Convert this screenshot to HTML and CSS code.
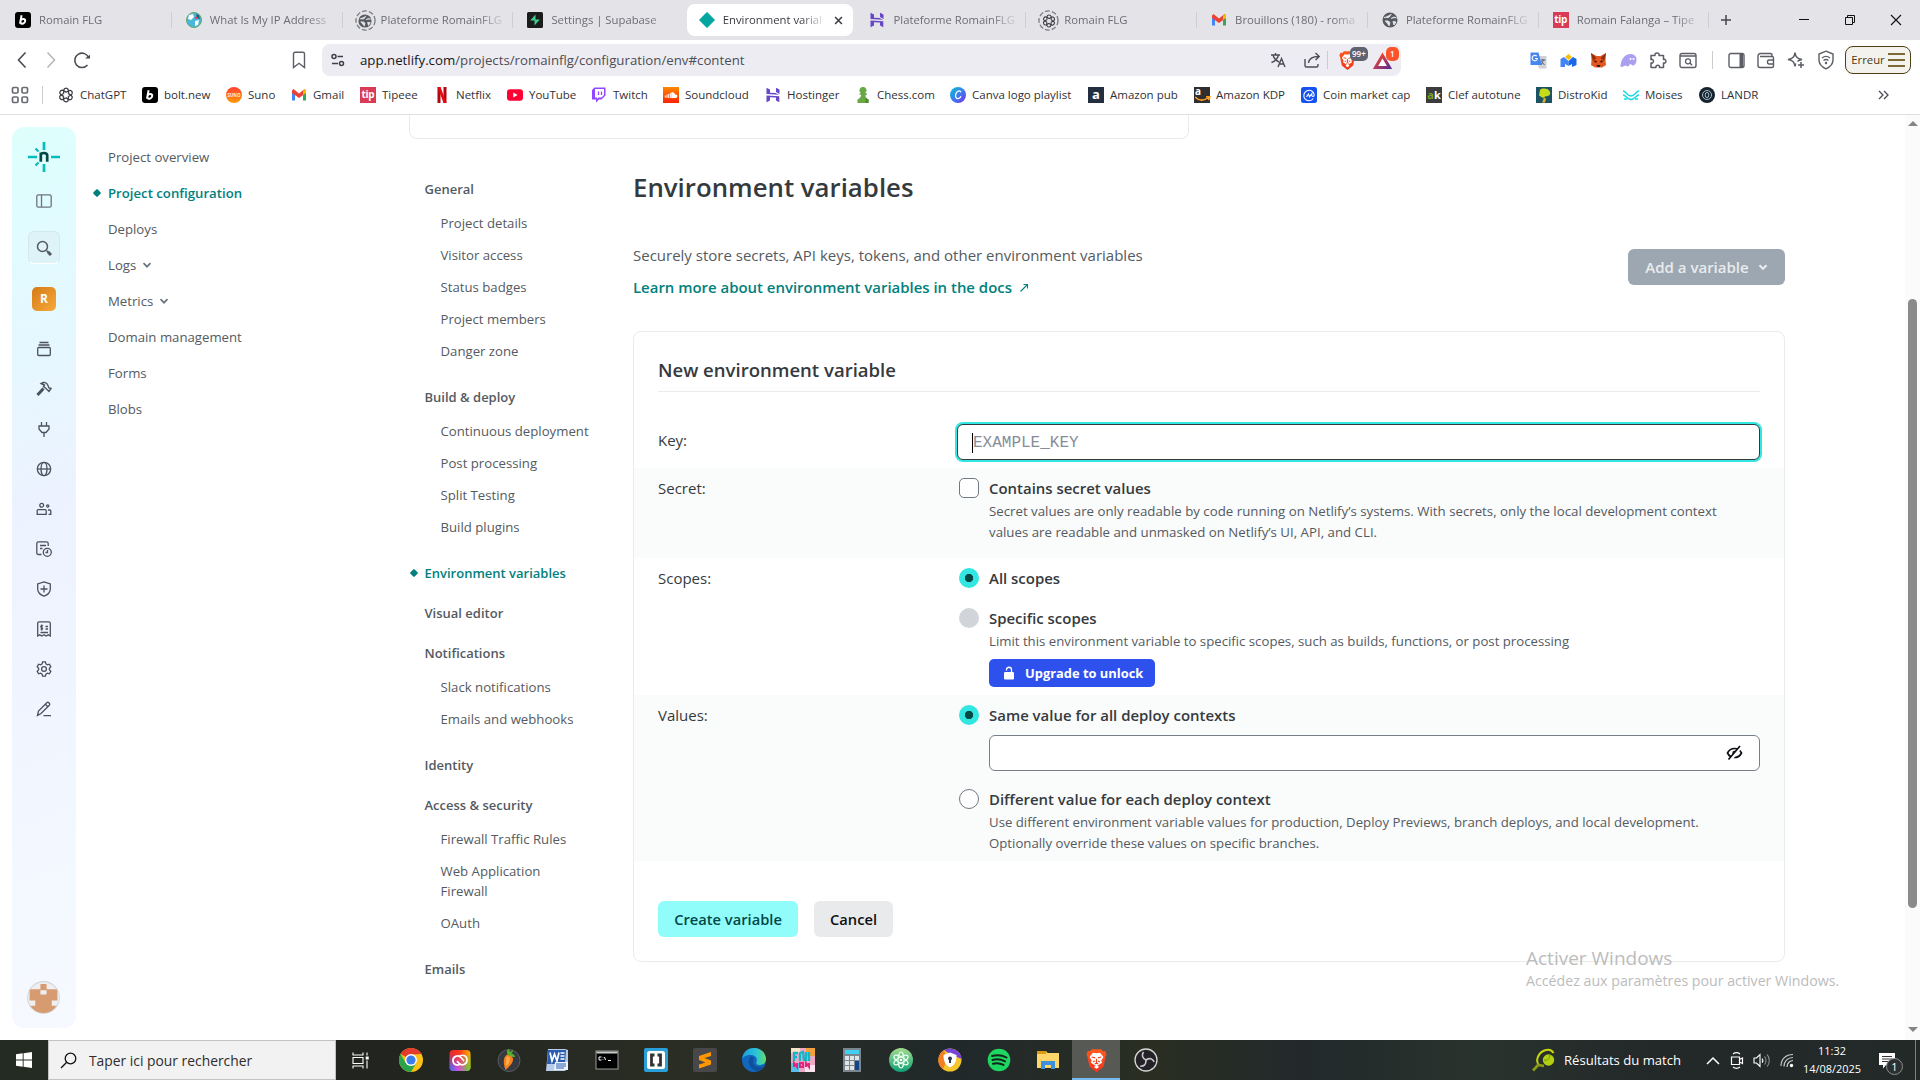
FILE: index.html
```html
<!DOCTYPE html>
<html lang="fr">
<head>
<meta charset="utf-8">
<title>Environment variables</title>
<link rel="stylesheet" href="styles.css">
</head>
<body>
<svg class="defs" width="0" height="0">
  <defs>
    <linearGradient id="gCanva" x1="0" y1="0" x2="1" y2="1"><stop offset="0" stop-color="#00c4cc"/><stop offset=".5" stop-color="#3a7ff0"/><stop offset="1" stop-color="#7d2ae8"/></linearGradient>
    <linearGradient id="gCloud" x1="0" y1="0" x2="0" y2="1"><stop offset="0" stop-color="#ff8800"/><stop offset="1" stop-color="#ff2200"/></linearGradient>
    <linearGradient id="gBrave" x1="0" y1="0" x2="0" y2="1"><stop offset="0" stop-color="#ff5a1f"/><stop offset="1" stop-color="#f0341c"/></linearGradient>
    <linearGradient id="gBat" x1="0" y1="0" x2="1" y2="1"><stop offset="0" stop-color="#ff4724"/><stop offset="1" stop-color="#662d91"/></linearGradient>
    <linearGradient id="gEdge" x1="0" y1="0" x2="1" y2="0"><stop offset="0" stop-color="#1b9de2"/><stop offset=".6" stop-color="#2cc3d5"/><stop offset="1" stop-color="#5fdc6a"/></linearGradient>
    <linearGradient id="gCcA" x1="0" y1="0" x2="1" y2="0"><stop offset="0" stop-color="#e8262a"/><stop offset=".5" stop-color="#ff3a1a"/><stop offset="1" stop-color="#ffb400"/></linearGradient>
    <linearGradient id="gCcB" x1="0" y1="0" x2="1" y2="0"><stop offset="0" stop-color="#3a6cff"/><stop offset=".45" stop-color="#d84fe0"/><stop offset="1" stop-color="#58dc20"/></linearGradient>
    <linearGradient id="gFade" x1="0" y1="0" x2="0" y2="1"><stop offset=".2" stop-color="#000"/><stop offset=".9" stop-color="#fff"/></linearGradient>
    <mask id="mFade" maskContentUnits="userSpaceOnUse"><rect width="24" height="24" fill="url(#gFade)"/></mask>
    <linearGradient id="gAtom" x1="0" y1="0" x2="0" y2="1"><stop offset="0" stop-color="#a5dc8c"/><stop offset="1" stop-color="#0f9f77"/></linearGradient>
    <symbol id="i-bolt" viewBox="0 0 16 16"><rect width="16" height="16" rx="3" fill="#000"/><path d="M6.600 3.200 5 11.800M5.800 8.200c1-1.800 4.600-1.800 4.400.8-.2 2.600-3.600 3.500-4.800 1.600" fill="none" stroke="#fff" stroke-width="2"/></symbol>
    <symbol id="i-globe" viewBox="0 0 16 16"><circle cx="8" cy="8" r="7.500" fill="#565a61"/><path d="M2 5.500c2-.5 3 .5 4.500 0S8 3 9.500 2M3 9h3l2 1.500L7 14M9 6.500 12 5l2.500 1M11 9.500l3 .5-2 3z" fill="#e4e3e8" stroke="#e4e3e8" stroke-width="1"/></symbol>
    <symbol id="i-earth" viewBox="0 0 16 16"><circle cx="8" cy="8" r="7.500" fill="#49b7dc" stroke="#65a963"/><path d="M3 3l4-1 1 3-3 3-3-1zM9 9l4-1-1 5-3 1z" fill="#fff"/><path d="M10 2l3 1 1 4-3-1z" fill="#235c88"/><circle cx="10" cy="6" r="1.200" fill="#e44"/></symbol>
    <symbol id="i-knot" viewBox="0 0 16 16"><g fill="none" stroke="currentColor" stroke-width="1.300"><path d="M8 5.300 11 3.600c2.800-1 4.300 2.300 2.500 4.100L10.400 9.500"/><path d="M8 5.300 11 3.600c2.800-1 4.300 2.300 2.500 4.100L10.400 9.500" transform="rotate(60 8 8)"/><path d="M8 5.300 11 3.600c2.800-1 4.300 2.300 2.500 4.100L10.400 9.500" transform="rotate(120 8 8)"/><path d="M8 5.300 11 3.600c2.800-1 4.300 2.300 2.500 4.100L10.400 9.500" transform="rotate(180 8 8)"/><path d="M8 5.300 11 3.600c2.800-1 4.300 2.300 2.500 4.100L10.400 9.500" transform="rotate(240 8 8)"/><path d="M8 5.300 11 3.600c2.800-1 4.300 2.300 2.500 4.100L10.400 9.500" transform="rotate(300 8 8)"/></g></symbol>
    <symbol id="i-supabase" viewBox="0 0 16 16"><rect width="16" height="16" rx="1.500" fill="#1c1c1c"/><path d="M8.500 2.500v6H3.200zM7.500 13.500v-6h5.300z" fill="#3ecf8e"/></symbol>
    <symbol id="i-diamond" viewBox="0 0 16 16"><path d="M8 .3 15.700 8 8 15.700.3 8z" fill="#05a6a2" stroke="#05a6a2" stroke-linejoin="round" stroke-width=".6"/></symbol>
    <symbol id="i-hostinger" viewBox="0 0 16 16"><path d="M1.500 7V.8L5 2.600v3.200l5.500.1L14 7.800zM11 5V.8l3.500 1.800V7zM1.500 15.200V8.600l12.800.6v6L11 13.400v-3l-6-.1v3.200z" fill="#6747c7"/></symbol>
    <symbol id="i-gmail" viewBox="0 0 16 16"><path d="M1 4v9.500h3V7z" fill="#4285f4"/><path d="M12 7v6.500h3V4z" fill="#34a853"/><path d="M1 3.500 2.500 2 8 6.500 13.500 2 15 3.500V6L8 11 1 6z" fill="#ea4335"/><path d="M12 4v4l3-2V4c0-1.500-1.500-2-2.500-1z" fill="#fbbc04"/></symbol>
    <symbol id="i-netflix" viewBox="0 0 16 16"><path d="M3.500 0h3v16l-3 .1zM9.500 0h3v16h-3z" fill="#b1060f"/><path d="M3.500 0h3l6 16h-3z" fill="#e50914"/></symbol>
    <symbol id="i-youtube" viewBox="0 0 16 16"><rect y="2.300" width="16" height="11.400" rx="3" fill="#ff0033"/><path d="M6.300 5.500v5l4.300-2.500z" fill="#fff"/></symbol>
    <symbol id="i-twitch" viewBox="0 0 16 16"><path d="M3.500.5h11v8l-4 4H8l-3 3v-3H1V3z" fill="#9146ff"/><path d="M4 2h9v6l-2.500 2.500h-3L6 12v-1.500H4z" fill="#fff"/><path d="M7.500 4.500V8M10.500 4.500V8" stroke="#9146ff" stroke-width="1.300"/></symbol>
    <symbol id="i-cloud" viewBox="0 0 16 16"><rect width="16" height="16" fill="url(#gCloud)"/><path d="M2.300 8.500v2M4 7.500v3.500M5.700 7v4M7.300 6v5" stroke="#fff"/><path d="M8.200 11V5.500c2-1 3.600.3 3.800 2 1.500-.3 2.500.6 2.400 1.800-.1 1-.8 1.700-1.800 1.700z" fill="#fff"/></symbol>
    <symbol id="i-chess" viewBox="0 0 16 16"><path d="M8 0a3.200 3.200 0 0 1 2 5.900L11.500 6.600v1.200H9.800c.2 2.200 1 3.200 3.700 4.700V16h-11v-3.500c2.700-1.500 3.500-2.500 3.700-4.700H4.500V6.600L6 5.900A3.200 3.200 0 0 1 8 0z" fill="#69a844"/><path d="M10.500 6.600h1V7.800H9.800c.2 2.200 1 3.200 3.700 4.700V16h-3z" fill="#4d8a2f"/></symbol>
    <symbol id="i-canva" viewBox="0 0 16 16"><circle cx="8" cy="8" r="8" fill="url(#gCanva)"/><path d="M11 5.200C10 3 6.800 3.700 5.800 7c-.9 3 .6 5 2.500 4.600 1.300-.3 2.200-1.300 2.700-2.300" fill="none" stroke="#fff" stroke-width="1.300"/></symbol>
    <symbol id="i-cmc" viewBox="0 0 16 16"><rect width="16" height="16" rx="2.500" fill="#1652f0"/><path d="M12.300 11.500a5.200 5.200 0 1 1 .9-3.500c0 2-2.400 2-2.400.2V6.700L8.500 9.800l-1-2.900-2 3" fill="none" stroke="#fff" stroke-width="1.100"/></symbol>
    <symbol id="i-distro" viewBox="0 0 16 16"><rect width="16" height="16" fill="#1d5265"/><path d="M4 3C6 .8 12 1 13.500 4s.5 4-1.500 5l-3 .5L7 11 3 8.500z" fill="#c6dc1b"/><path d="M8 10l2 2-1 3.500H6L7.500 12z" fill="#d8b12a"/></symbol>
    <symbol id="i-moises" viewBox="0 0 16 16"><path d="M0 4c3 0 4 5 8 5s5-5 8-5M0 8c3 0 4 4.500 8 4.500S13 8 16 8M1 12h3M12 12h3" fill="none" stroke="#19d7e5" stroke-width="1.400"/></symbol>
    <symbol id="i-landr" viewBox="0 0 16 16"><circle cx="8" cy="8" r="8" fill="#17242f"/><circle cx="8" cy="8" r="4.500" fill="none" stroke="#a9bdcb"/><rect x="6.300" y="5.500" width="3.400" height="5" rx="1.700" fill="none" stroke="#a9bdcb"/></symbol>
    <symbol id="i-lion" viewBox="0 0 24 28"><path d="M7 1h10l2.500 2.500L22 3l1.500 4-1 2L20 21l-8 6.500L4 21 1.500 9l-1-2L2 3l2.500.5z" fill="url(#gBrave)"/><path d="M8 5l4 .7L16 5l4 5-2.500 4 .8 2.500L13 20l2 1.500-3 2-3-2 2-1.500-5.300-3.500.8-2.500L4 10z" fill="#fff"/><path d="M6.500 10l4 1M17.500 10l-4 1M12 12v5l-2 1M12 17l2 1M8 15.500l2.500-1M16 15.500l-2.500-1" stroke="#f4421c" stroke-width="1.300" fill="none"/></symbol>
    <symbol id="i-dot-ring" viewBox="0 0 22 22"><circle cx="11" cy="11" r="10" fill="none" stroke="#7b7c82" stroke-width="1.400" stroke-dasharray="5 2.200"/></symbol>
    <symbol id="i-chev" viewBox="0 0 10 10"><path d="M1.500 3.200 5 6.700l3.500-3.500" fill="none" stroke="currentColor" stroke-width="1.700"/></symbol>
  </defs>
</svg>

<div class="screen">
  <header class="tabstrip">
    <div class="tab"><svg class="fav"><use href="#i-bolt"/></svg><span class="tab-title">Romain FLG</span></div>
    <div class="tab"><svg class="fav"><use href="#i-earth"/></svg><span class="tab-title">What Is My IP Address</span></div>
    <div class="tab"><span class="ringed"><svg class="ring"><use href="#i-dot-ring"/></svg><svg class="fav"><use href="#i-globe"/></svg></span><span class="tab-title">Plateforme RomainFLG</span></div>
    <div class="tab no-sep"><svg class="fav"><use href="#i-supabase"/></svg><span class="tab-title">Settings | Supabase</span></div>
    <div class="tab active"><svg class="fav"><use href="#i-diamond"/></svg><span class="tab-title">Environment varial</span><svg class="close" viewBox="0 0 10 10"><path d="M1.200 1.200l7.600 7.600M8.800 1.200 1.200 8.800" stroke="#3a3b40" stroke-width="1.700"/></svg></div>
    <div class="tab"><svg class="fav"><use href="#i-hostinger"/></svg><span class="tab-title">Plateforme RomainFLG</span></div>
    <div class="tab"><span class="ringed"><svg class="ring"><use href="#i-dot-ring"/></svg><svg class="fav dark"><use href="#i-knot"/></svg></span><span class="tab-title">Romain FLG</span></div>
    <div class="tab"><svg class="fav"><use href="#i-gmail"/></svg><span class="tab-title">Brouillons (180) - roma</span></div>
    <div class="tab"><svg class="fav"><use href="#i-globe"/></svg><span class="tab-title">Plateforme RomainFLG</span></div>
    <div class="tab"><span class="fav tip">tip</span><span class="tab-title">Romain Falanga – Tipe</span></div>
    <svg class="newtab" viewBox="0 0 12 12"><path d="M6 1v10M1 6h10" stroke="#45464c" stroke-width="1.500"/></svg>
    <div class="winctl">
      <svg viewBox="0 0 12 12"><path d="M1 5.500h10" stroke="#111"/></svg>
      <svg viewBox="0 0 12 12"><path d="M1.500 3.500h7v7h-7zM3.500 3.500v-2h7v7h-2" fill="none" stroke="#111"/></svg>
      <svg viewBox="0 0 12 12"><path d="M1 1l10 10M11 1 1 11" stroke="#111" stroke-width="1.100"/></svg>
    </div>
  </header>

  <div class="toolbar">
    <div class="nav-btns">
      <svg width="12" height="18" viewBox="0 0 12 18"><path d="M9.500 1.500 2.500 9l7 7.500" fill="none" stroke="#4b4d55" stroke-width="1.600"/></svg>
      <svg width="12" height="18" viewBox="0 0 12 18"><path d="M2.500 1.500 9.500 9l-7 7.500" fill="none" stroke="#b6b7bc" stroke-width="1.600"/></svg>
      <svg width="18" height="18" viewBox="0 0 18 18"><path d="M14.500 14a7.200 7.200 0 1 1 1.300-7" fill="none" stroke="#4b4d55" stroke-width="1.600"/><path d="M12 7.500h5V3.800z" fill="#4b4d55"/></svg>
    </div>
    <svg class="bookmark" width="14" height="18" viewBox="0 0 14 18"><path d="M1.500 3c0-1 .6-1.700 1.600-1.700h7.800c1 0 1.600.7 1.600 1.700v13.500L7 12.300 1.500 16.500z" fill="none" stroke="#5c5e66" stroke-width="1.400"/></svg>
    <div class="urlbar">
      <svg width="14" height="14" viewBox="0 0 14 14"><g fill="none" stroke="#3e4047" stroke-width="1.500"><circle cx="3" cy="3.500" r="2"/><path d="M6.500 3.500H12M1 10.500h6"/><circle cx="10.500" cy="10.500" r="2"/></g></svg>
      <span class="url"><b>app.netlify.com</b>/projects/romainflg/configuration/env#content</span>
      <svg class="u-tr" width="17" height="16" viewBox="0 0 17 16"><g fill="none" stroke="#4b4d55" stroke-width="1.400"><path d="M1 3h9M5.500 1v2M3 3c1 4 4 6 6 7M8.500 3c-1 4-4 6.500-7 7.500M8 15l3.500-8.500L15 15M9.500 12h4.200"/></g></svg>
      <svg class="u-sh" width="17" height="16" viewBox="0 0 17 16"><path d="M1 7v6.500c0 1 .5 1.500 1.500 1.500h10c1 0 1.500-.5 1.500-1.500V12M4.500 11C5 7 8 4.500 14.500 4.500M11.500 1l3.700 3.500-3.700 3.500" fill="none" stroke="#4b4d55" stroke-width="1.400"/></svg>
      <i class="vsep"></i>
      <span class="badged"><svg width="17" height="21" viewBox="0 0 24 28"><use href="#i-lion"/></svg><em class="bdg grey">99+</em></span>
      <span class="badged"><svg width="19" height="17" viewBox="0 0 19 17"><path d="M9.500 3.500 16.500 15.500h-14z" fill="#fff" stroke="url(#gBat)" stroke-width="3"/></svg><em class="bdg red">1</em></span>
    </div>
    <div class="exts">
      <svg width="17" height="17" viewBox="0 0 17 17"><path d="M6 4h10.500v12.500H9z" fill="#cfd1d6"/><path d="M.5.500h8L12 13H.5z" fill="#4686ef"/><path d="M6.800 4.200a2.700 2.700 0 1 0 .7 2.300H5" fill="none" stroke="#fff" stroke-width="1.100"/><path d="M11 8h4.500M13 7v1c0 2-1 3.500-2 4.500M11.500 9.500l3 3.500" stroke="#5a5e68" fill="none"/></svg>
      <svg width="17" height="15" viewBox="0 0 17 15"><path d="M8.500 1 12 4 8.500 7 5 4z" fill="#fbbc04"/><path d="M.5 6 4 4l4.500 4v5L5 11v3H.5z" fill="#4285f4"/><path d="M16.500 6 13 4 8.500 8v5l3.500-2v3l4.500-2z" fill="#1a67e8"/></svg>
      <svg width="17" height="17" viewBox="0 0 17 17"><path d="M1 1l5.500 3h4L16 1l-.5 8 .5 4-4 2.500H5L1 13l.5-4z" fill="#e4571e"/><path d="M1 1l5.500 5L3 9z" fill="#8f2f11"/><path d="M16 1l-5.500 5L14 9z" fill="#8f2f11"/><path d="M4.500 9l2 1M12.500 9l-2 1" stroke="#2b1a10" stroke-width="1.400"/><path d="M6.500 13h4l-1 2h-2z" fill="#222"/></svg>
      <svg width="17" height="15" viewBox="0 0 17 15"><path d="M.5 14c0-7 4-13 10-13 4 0 6 2.500 6 5.500 0 4-2 6-4 6-1 0-1-1.500-2-1.500s-1 2.500-3 2.500c-1 0-1-1-2-1s-2 1.500-5 1.500z" fill="#ab9ff2"/><circle cx="10.500" cy="6" r="1" fill="#fff"/><circle cx="13.500" cy="6" r="1" fill="#fff"/></svg>
      <svg width="18" height="18" viewBox="0 0 18 18"><path d="M2 4.500h4c-1-3.500 5-3.500 4 0h4.500v4c3.200-1 3.200 4.500 0 3.500v4.500h-4c.8-3-4.200-3-3.500 0H2V12c3.200 1 3.200-4.500 0-3.500z" fill="none" stroke="#5c5e66" stroke-width="1.500" stroke-linejoin="round"/></svg>
      <svg width="18" height="17" viewBox="0 0 18 17"><rect x="1" y="1.500" width="16" height="14" rx="2" fill="none" stroke="#5c5e66" stroke-width="1.400"/><path d="M1 4h16M11 11l2 2.200" stroke="#5c5e66" stroke-width="1.400"/><circle cx="9" cy="9.300" r="2.500" fill="none" stroke="#5c5e66" stroke-width="1.300"/></svg>
      <i class="vsep"></i>
      <svg width="17" height="17" viewBox="0 0 17 17"><rect x="1" y="1.500" width="15" height="14" rx="2" fill="none" stroke="#5c5e66" stroke-width="1.400"/><path d="M11.500 2H15v13h-3.500z" fill="#5c5e66"/></svg>
      <svg width="18" height="17" viewBox="0 0 18 17"><g fill="none" stroke="#5c5e66" stroke-width="1.400"><path d="M15 4.500V3c0-1-.6-1.500-1.500-1.500h-10C2 1.500 1 2.500 1 4v9.500c0 1 .7 2 2 2h12c1 0 1.500-.6 1.500-1.500V6c0-1-.5-1.500-1.500-1.500H3"/><path d="M16.500 8H12c-2 0-2 4 0 4h4.500"/></g></svg>
      <svg width="18" height="18" viewBox="0 0 18 18"><path d="M8 1.500C8.500 6 10 7.500 15 8.500c-2 .4-3.500 1-4.500 1.800M8 15.500C7.500 11 6 9.500 1 8.500 6 7.500 7.500 6 8 1.500M8 15.500c.2-1.200.4-2.200.8-3M14 11v6M11 14h6" fill="none" stroke="#5c5e66" stroke-width="1.500"/></svg>
      <svg width="18" height="20" viewBox="0 0 18 20"><g fill="none" stroke="#5c5e66" stroke-width="1.400"><path d="M9 1.200 16 4v6c0 4-3 7-7 8.800C5 17 2 14 2 10V4z"/><path d="M5 8c2.500-2 5.500-2 8 0M6.500 10.500c1.500-1.200 3.500-1.200 5 0"/></g><circle cx="9" cy="13" r="1.200" fill="#5c5e66"/></svg>
    </div>
    <div class="errbtn">Erreur<svg width="17" height="16" viewBox="0 0 17 16"><path d="M0 2h17M0 8h17M0 14h17" stroke="#7d6a33" stroke-width="1.800"/></svg></div>
  </div>

  <div class="bookmarks">
    <svg class="apps" width="18" height="18" viewBox="0 0 18 18"><g fill="none" stroke="#6a6c74" stroke-width="1.700"><rect x="1.500" y="1.500" width="5.500" height="5.500" rx="1.200"/><rect x="11" y="1.500" width="5.500" height="5.500" rx="1.200"/><rect x="1.500" y="11" width="5.500" height="5.500" rx="1.200"/><rect x="11" y="11" width="5.500" height="5.500" rx="1.200"/></g></svg>
    <i class="vsep"></i>
    <div class="bm-list">
      <span class="bm"><svg class="fav dark"><use href="#i-knot"/></svg>ChatGPT</span>
      <span class="bm"><svg class="fav"><use href="#i-bolt"/></svg>bolt.new</span>
      <span class="bm"><span class="fav suno">SUNO</span>Suno</span>
      <span class="bm"><svg class="fav"><use href="#i-gmail"/></svg>Gmail</span>
      <span class="bm"><span class="fav tip">tip</span>Tipeee</span>
      <span class="bm"><svg class="fav"><use href="#i-netflix"/></svg>Netflix</span>
      <span class="bm"><svg class="fav"><use href="#i-youtube"/></svg>YouTube</span>
      <span class="bm"><svg class="fav"><use href="#i-twitch"/></svg>Twitch</span>
      <span class="bm"><svg class="fav"><use href="#i-cloud"/></svg>Soundcloud</span>
      <span class="bm"><svg class="fav"><use href="#i-hostinger"/></svg>Hostinger</span>
      <span class="bm"><svg class="fav"><use href="#i-chess"/></svg>Chess.com</span>
      <span class="bm"><svg class="fav"><use href="#i-canva"/></svg>Canva logo playlist</span>
      <span class="bm"><span class="fav amz">a</span>Amazon pub</span>
      <span class="bm"><span class="fav kdp">a<svg viewBox="0 0 16 6"><path d="M0 1c4 4 9 4 14 0M11 .5l4-.2-1.500 4" fill="none" stroke="#ff9d1e" stroke-width="1.600"/></svg></span>Amazon KDP</span>
      <span class="bm"><svg class="fav"><use href="#i-cmc"/></svg>Coin market cap</span>
      <span class="bm"><span class="fav ak"><i>a</i>k</span>Clef autotune</span>
      <span class="bm"><svg class="fav"><use href="#i-distro"/></svg>DistroKid</span>
      <span class="bm"><svg class="fav"><use href="#i-moises"/></svg>Moises</span>
      <span class="bm"><svg class="fav"><use href="#i-landr"/></svg>LANDR</span>
    </div>
    <svg class="more" width="11" height="10" viewBox="0 0 11 10"><path d="M1 1l4 4-4 4M6 1l4 4-4 4" fill="none" stroke="#4b4d55" stroke-width="1.300"/></svg>
  </div>

  <div class="page">
    <aside class="rail">
      <svg class="logo" viewBox="0 0 32 32"><g stroke="#05bdba" stroke-width="2.700"><path d="M16 1v8M16 23v8M0 16h9M23 16h9"/><path d="M7.500 7.500l3 3M7.500 24.500l3-3" stroke-width="2.300"/></g><path d="M12.800 20.700v-9.200M12.800 13c2-1.500 6.400-1.500 6.400 1.500v6.200" fill="none" stroke="#014847" stroke-width="2.700"/></svg>
      <svg class="panel" viewBox="0 0 16 16"><rect x=".8" y="1.800" width="14.400" height="12.400" rx="1.500" fill="none" stroke="#6c7480" stroke-width="1.300"/><path d="M5.500 2v12" stroke="#6c7480" stroke-width="1.300"/></svg>
      <div class="search-btn"><svg class="ico" viewBox="0 0 16 16"><circle cx="6.500" cy="6.500" r="5" fill="none" stroke="#545a61" stroke-width="1.500"/><path d="M10.500 10.500l1.500 1.500" stroke="#545a61" stroke-width="1.500"/><path d="M11.800 11.800 15 15" stroke="#545a61" stroke-width="3"/></svg></div>
      <div class="team">R</div>
      <div class="rail-icons">
        <svg class="ico" viewBox="0 0 16 16"><path d="M3.500 1.500h9M2.500 4h11"/><rect x="1.700" y="6.500" width="12.600" height="8" rx="1"/></svg>
        <svg class="ico" viewBox="0 0 16 16"><path d="M5 2.500c3-2 6-1 7 2l1 2.500 2 .5-2 3-3.500-3.500-2-1.500 1-1.500z" stroke-width="1.400"/><path d="M7.500 7.500 1.500 14" stroke-width="3"/></svg>
        <svg class="ico" viewBox="0 0 16 16"><path d="M5.500 1v3.500M10.500 1v3.500M3 5h10v3l-3 3.500H6L3 8zM8 11.500V16"/></svg>
        <svg class="ico" viewBox="0 0 16 16"><circle cx="8" cy="8" r="6.700"/><ellipse cx="8" cy="8" rx="3" ry="6.700"/><path d="M1.300 8h13.400"/></svg>
        <svg class="ico" viewBox="0 0 16 16"><circle cx="5.700" cy="4.300" r="1.900"/><circle cx="11.700" cy="5" r="1.100"/><path d="M1.200 13.300V9.600c0-.8.5-1 1-1h7c.5 0 1 .4 1 1v3.700zM12 9h1.800c.6 0 1 .3 1 .9v3.400H12.500"/></svg>
        <svg class="ico" viewBox="0 0 16 16"><path d="M5.500 13.500H2.500c-1 0-1.700-.5-1.700-1.500V2.500C.8 1.500 1.500.8 2.500.8h8c1 0 1.700.7 1.700 1.700V5M4 4.500h6M4 7.500h2.500"/><circle cx="11.300" cy="11.300" r="4"/><path d="M11.500 9v2.500h-2"/></svg>
        <svg class="ico" viewBox="0 0 16 16"><path d="M8 .9 14.300 3v5c0 3.500-3 6-6.300 7.200C4.700 14 1.700 11.500 1.700 8V3zM8 4.500v7M4.500 8h7"/></svg>
        <svg class="ico" viewBox="0 0 16 16"><path d="M1.700 15V2.500c0-1 .6-1.700 1.600-1.700h9.400c1 0 1.600.7 1.600 1.700V15l-2-1.200L10 15l-2-1.200L6 15l-2.300-1.200zM9.500 5.500h2.500M9.500 8h2.500M4.500 11.500h7.500M7 5c-2-1-3 .8-1.500 1.500S7 8.800 4.500 8M5.700 3.500V9.500"/></svg>
        <svg class="ico" viewBox="0 0 16 16"><path d="M6.600.9h2.800l.5 2 1.500.9 2-.6 1.400 2.500L13.400 7.200v1.600l1.400 1.500-1.400 2.500-2-.6-1.500.9-.5 2H6.600l-.5-2-1.500-.9-2 .6-1.400-2.500 1.400-1.500V7.200L1.200 5.700l1.400-2.500 2 .6 1.500-.9z"/><circle cx="8" cy="8" r="2.400"/></svg>
        <svg class="ico" viewBox="0 0 16 16"><path d="M1.500 14.500 2.500 10 10.800 1.700c1.500-1.200 3.700 1 2.500 2.500L5 12.500zM9.300 3.200l2.500 2.500M7.500 14.700h7.500"/></svg>
      </div>
      <svg class="avatar" viewBox="0 0 32 32"><defs><clipPath id="av"><circle cx="16" cy="16" r="15"/></clipPath></defs><circle cx="16" cy="16" r="15.400" fill="#efefef" stroke="#d5d6d8"/><path clip-path="url(#av)" d="M13 3h6v5h10.500v11H24v5h6v7H2v-7h6v-5H2.500V8H13zM13 9v4h6V9z" fill="#d69b71"/></svg>
    </aside>

    <nav class="project-nav">
      <a>Project overview</a>
      <a class="current">Project configuration</a>
      <a>Deploys</a>
      <a>Logs<svg class="chev"><use href="#i-chev"/></svg></a>
      <a>Metrics<svg class="chev"><use href="#i-chev"/></svg></a>
      <a>Domain management</a>
      <a>Forms</a>
      <a>Blobs</a>
    </nav>

    <main class="content">
      <div class="prev-card"></div>
      <div class="columns">
        <nav class="subnav">
          <section><h4>General</h4><ul><li>Project details</li><li>Visitor access</li><li>Status badges</li><li>Project members</li><li>Danger zone</li></ul></section>
          <section><h4>Build &amp; deploy</h4><ul><li>Continuous deployment</li><li>Post processing</li><li>Split Testing</li><li>Build plugins</li></ul></section>
          <section><h4 class="current">Environment variables</h4></section>
          <section><h4>Visual editor</h4></section>
          <section><h4>Notifications</h4><ul><li>Slack notifications</li><li>Emails and webhooks</li></ul></section>
          <section><h4>Identity</h4></section>
          <section><h4>Access &amp; security</h4><ul><li>Firewall Traffic Rules</li><li>Web Application<br>Firewall</li><li>OAuth</li></ul></section>
          <section><h4>Emails</h4></section>
        </nav>
        <div class="main">
          <h1>Environment variables</h1>
          <div class="intro">
            <div><p class="lead">Securely store secrets, API keys, tokens, and other environment variables</p>
              <a class="doc">Learn more about environment variables in the docs<svg width="10" height="10" viewBox="0 0 10 10"><path d="M1.500 8.500 8 2M4.500 1.500h4v4" fill="none" stroke="#02807d" stroke-width="1.100"/></svg></a></div>
            <div class="btn add">Add a variable<svg class="chev" viewBox="0 0 10 10"><path d="M1.500 3.200 5 6.700l3.500-3.500" fill="none" stroke="#e9ebed" stroke-width="2.300"/></svg></div>
          </div>
          <div class="card">
            <h2>New environment variable</h2>
            <div class="row key"><div class="lbl">Key:</div><div class="input focus"><span class="ph">EXAMPLE_KEY</span></div></div>
            <div class="row tint secret"><div class="lbl">Secret:</div>
              <div class="opts"><div class="opt"><i class="check"></i><div><strong>Contains secret values</strong><p class="wide">Secret values are only readable by code running on Netlify’s systems. With secrets, only the local development context<br>values are readable and unmasked on Netlify’s UI, API, and CLI.</p></div></div></div></div>
            <div class="row scopes"><div class="lbl">Scopes:</div>
              <div class="opts"><div class="opt"><i class="radio on"></i><strong>All scopes</strong></div>
                <div class="opt"><i class="radio off"></i><div><strong>Specific scopes</strong><p>Limit this environment variable to specific scopes, such as builds, functions, or post processing</p>
                  <div class="upgrade"><svg width="10" height="14" viewBox="0 0 10 14"><path d="M2.500 4.500V3.500c0-3 5-3 5 0v3" fill="none" stroke="#fff" stroke-width="1.300"/><rect x="0" y="6" width="10" height="7.500" rx="1.200" fill="#fff"/></svg>Upgrade to unlock</div></div></div></div></div>
            <div class="row tint values"><div class="lbl">Values:</div>
              <div class="opts"><div class="opt"><i class="radio on"></i><div class="grow"><strong>Same value for all deploy contexts</strong>
                <div class="input val"><svg width="17" height="16" viewBox="0 0 17 16"><path d="M1.500 8c3-6 11-6 14 0-3 6-11 6-14 0z" fill="none" stroke="#0e1013" stroke-width="1.700"/><circle cx="8.500" cy="8" r="2.200" fill="#0e1013"/><path d="M4 15.500 15 1.500" stroke="#fff" stroke-width="3"/><path d="M2.500 14.500 14 1" stroke="#0e1013" stroke-width="1.700"/></svg></div></div></div>
                <div class="opt"><i class="radio"></i><div><strong>Different value for each deploy context</strong><p>Use different environment variable values for production, Deploy Previews, branch deploys, and local development.<br>Optionally override these values on specific branches.</p></div></div></div></div>
            <div class="actions"><div class="btn create">Create variable</div><div class="btn cancel">Cancel</div></div>
          </div>
        </div>
      </div>
    </main>
    <div class="scrollbar"><i class="up"></i><i class="thumb"></i><i class="down"></i></div>
  </div>

  <footer class="taskbar">
    <div class="start"><svg width="16" height="16" viewBox="0 0 16 16"><path d="M0 2.300 6.700 1.300v6.300H0zM7.600 1.200 16 0v7.600H7.600zM0 8.500h6.700v6.300L0 13.800zM7.600 8.500H16V16l-8.400-1.200z" fill="#fff"/></svg></div>
    <div class="tsearch"><svg width="17" height="17" viewBox="0 0 17 17"><circle cx="10.500" cy="6.500" r="5.300" fill="none" stroke="#111" stroke-width="1.300"/><path d="M6.700 10.300 1 16" stroke="#111" stroke-width="1.300"/></svg>Taper ici pour rechercher</div>
    <div class="tasks">
      <div class="t view"><svg width="17" height="16" viewBox="0 0 17 16"><path d="M1 0v2.500h10V0M1 5h10v6H1zM1 16v-2.500h10V16M15 0v3M15 8v8" fill="none" stroke="#fff" stroke-width="1.100"/><path d="M13.700 4h3v3h-3z" fill="#fff"/></svg></div>
      <div class="t"><svg viewBox="0 0 24 24"><circle cx="12" cy="12" r="12" fill="#fbc116"/><path d="M12 12 1.600 6A12 12 0 0 1 22.400 6L12 6.500z" fill="#e33b2e"/><path d="M1.600 6A12 12 0 0 0 12 24l5.200-9L12 12 6.800 15z" fill="#2ba24c"/><circle cx="12" cy="12" r="6" fill="#fff"/><circle cx="12" cy="12" r="4.600" fill="#3b7ded"/></svg></div>
      <div class="t"><svg viewBox="0 0 24 24"><rect x="1.500" y="2" width="21" height="21" rx="4" fill="url(#gCcA)"/><rect x="1.500" y="2" width="21" height="21" rx="4" fill="url(#gCcB)" mask="url(#mFade)"/><g fill="none" stroke="#fff" stroke-width="1.700"><path d="M12.500 15.500c-2 2.500-7 2.200-7.500-2.500s5-6.500 8-3.500l3 3.500"/><path d="M11 9c2.500-3 8-2 8 3s-5.500 6-8 3.200L9 13"/></g></svg></div>
      <div class="t"><svg viewBox="0 0 24 24"><circle cx="12" cy="12.500" r="11" fill="#36393f" stroke="#595c62"/><path d="M8.500 8c3-3 7-1 7.500 3s-4 8-7.500 11c-2-5-2.500-11 0-14z" fill="#f5821e"/><path d="M9.500 9c2-1.500 4 0 3 4s-2.500 4-3.500 5z" fill="#ffb04a"/><path d="M11 7C9 4 10 2 12 1l1 3 3-2c0 2-1 3-2 3.500 3 .5 4 2 4 3.500-2 0-4-.5-7-2z" fill="#58b22d"/></svg></div>
      <div class="t word"><svg viewBox="0 0 24 24"><path d="M3 1h17l3 1v18l-3 3H1z" fill="#b9cdea"/><path d="M3 2h18l-1 14H2z" fill="#2b5cad"/><path d="M5 4.500 7 13l2.500-7 2.500 7 2-8.500M15.500 5h4M15.500 8h4M15.500 11h4" fill="none" stroke="#fff" stroke-width="1.700"/><path d="M10 14h13v8H9z" fill="#eef4ff"/><path d="M11 16h10M11 18h10M11 20h8" stroke="#2b5cad"/></svg></div>
      <div class="t"><svg viewBox="0 0 24 24"><rect x="1" y="3" width="22" height="18" fill="#000" stroke="#9a9c9e"/><path d="M1.500 4.500h21" stroke="#c9cacb" stroke-width="2"/><path d="M6.500 9H4v3h2.500M8 9.500v.5M8 11.500v.5M9.500 9l1 3M13 12.500h3" stroke="#fff" fill="none"/></svg></div>
      <div class="t"><svg viewBox="0 0 24 24"><rect x="0" y="0" width="24" height="24" rx="2" fill="#2a9fd8"/><rect x="3" y="3" width="18" height="18" rx="2.500" fill="#fff"/><path d="M10.500 7H7.500v10h3M13.500 7h3v10h-3" fill="none" stroke="#333" stroke-width="2.800"/></svg></div>
      <div class="t"><svg viewBox="0 0 24 24"><rect width="24" height="24" rx="2" fill="#48484b"/><path d="M18 4v4L11.500 10l6.500 2.500v4L6 20.500v-4l6.500-2L6 12V8z" fill="#ff9800"/></svg></div>
      <div class="t"><svg viewBox="0 0 24 24"><circle cx="12" cy="12" r="12" fill="#1167bd"/><path d="M0 11C1 3 7 0 12 0c8 0 12 6 12 11 0 4-3 6-6 6-3 0-4.500-1.500-3.500-3C16 9 12 7 9 7c-5 0-8 2-9 4z" fill="url(#gEdge)"/><path d="M9 8c-4 4-3 12 6 15 4-.5 7-3 8-5-9 3-14-2-11-7.500z" fill="#0f4f9c"/></svg></div>
      <div class="t"><svg viewBox="0 0 24 24"><path d="M0 0h24v24H0z" fill="#eda9c4"/><path d="M0 0h9v5H0z" fill="#f6e3c8"/><path d="M15 0h9v8h-9z" fill="#f3a23b"/><path d="M0 15h8v9H0z" fill="#58bfe6"/><path d="M14 17h10v7H14z" fill="#fbe2ef"/><path d="M3 13V5h4M3 9h3M9 13V5l3-1 1 9M15 4v9M18 4v9" stroke="#12b6c9" stroke-width="2.300" fill="none"/><path d="M3 19v-4l3 4v-4M9 15v4h3v-4zM15 19v-4l3 4v-4" stroke="#e0267e" stroke-width="2" fill="none"/></svg></div>
      <div class="t"><svg viewBox="0 0 24 24"><rect x="3" width="18" height="24" fill="#7b858c"/><path d="M5 2h14v4H5z" fill="#3fd0f4"/><path d="M5 8h4v4H5zM10 8h4v4h-4zM15 8h4v4h-4zM5 13h4v4H5zM10 13h4v4h-4zM5 18h4v4H5zM10 18h4v4h-4z" fill="#dfe4e8"/><path d="M15 13h4v9h-4z" fill="#12468c"/></svg></div>
      <div class="t"><svg viewBox="0 0 24 24"><circle cx="12" cy="12" r="12" fill="url(#gAtom)"/><g fill="none" stroke="#eafff2" stroke-width="1.200"><ellipse cx="12" cy="12" rx="3" ry="8"/><ellipse cx="12" cy="12" rx="3" ry="8" transform="rotate(60 12 12)"/><ellipse cx="12" cy="12" rx="3" ry="8" transform="rotate(120 12 12)"/></g><circle cx="12" cy="12" r="1.300" fill="#fff"/></svg></div>
      <div class="t"><svg viewBox="0 0 24 24"><circle cx="12" cy="12" r="11.500" fill="#f4c62c"/><path d="M6 2c7-4 17 0 17.500 9L12 6z" fill="#7446d8"/><path d="M6 2C-2 7-1 18 5 21l4-9z" fill="#f08023"/><path d="M12 4.500l6.500 2.500c0 7-2 10-6.500 12.500C7.500 17 5.500 14 5.500 7z" fill="#fff"/><circle cx="12" cy="10.500" r="2" fill="#26344e"/><path d="M11 11h2v4h-2z" fill="#26344e"/></svg></div>
      <div class="t"><svg viewBox="0 0 24 24"><circle cx="12" cy="12" r="11.300" fill="#1ed760"/><path d="M5 8c5-1.500 10-1 14.500 1.500M5.500 12c4.500-1.300 8.500-.8 12.500 1.300M6 15.700c4-1 7-.7 10.500 1.200" fill="none" stroke="#14231b" stroke-width="2" stroke-linecap="round"/></svg></div>
      <div class="t"><svg viewBox="0 0 24 24"><path d="M1 3h9l1.500 2H23v15H1z" fill="#fdd66b"/><path d="M1 3h9v3H1z" fill="#dc9a10"/><path d="M5 21v-8h14v8h-4v-4H9v4z" fill="#3c8fd9"/></svg></div>
      <div class="t open"><svg width="21" height="25" viewBox="0 0 24 28"><use href="#i-lion"/></svg></div>
      <div class="t"><svg viewBox="0 0 24 24"><circle cx="12" cy="12" r="11" fill="#242226" stroke="#d6d6d8" stroke-width="1.300"/><g fill="none" stroke="#c9c8cc" stroke-width="1.600"><path d="M12 12c-4-2-4.500-5-2.500-8"/><path d="M12 12c-4-2-4.500-5-2.500-8" transform="rotate(120 12 12)"/><path d="M12 12c-4-2-4.500-5-2.500-8" transform="rotate(240 12 12)"/></g></svg></div>
    </div>
    <div class="news"><svg width="24" height="24" viewBox="0 0 24 24"><path d="M8 17c-4-4-1-13 7-15 3-.7 6 0 7.500 3" fill="none" stroke="#c7d40e" stroke-width="2"/><path d="M8 16 2 22.500M8 17l5 1" stroke="#8c9c12" stroke-width="2.600"/><circle cx="17.500" cy="12" r="5.700" fill="#b2cf12"/><path d="M13 12c4 1 5-1 6-5" stroke="#6f8d0c" fill="none"/></svg>Résultats du match</div>
    <div class="tray">
      <svg width="14" height="9" viewBox="0 0 14 9"><path d="M1 8l6-6 6 6" fill="none" stroke="#fff" stroke-width="1.500"/></svg>
      <svg width="14" height="17" viewBox="0 0 14 17"><path d="M3 2c2-1.500 5-1.500 7 0M3 15c2 1.500 5 1.500 7 0M1.500 5h8v7.500h-8zM9.500 7.500 12.500 6v5.500l-3-1.500" fill="none" stroke="#fff" stroke-width="1.200"/></svg>
      <svg width="17" height="15" viewBox="0 0 17 15"><path d="M1 5h2.500L7 1.500v12L3.500 10H1z" fill="none" stroke="#fff" stroke-width="1.100"/><path d="M9 5.500c1 1.200 1 3 0 4" fill="none" stroke="#fff" stroke-width="1.100"/><path d="M11.500 3.500c2 2 2 6 0 8M14 1.500c3 3 3 9 0 12" fill="none" stroke="#85898a" stroke-width="1.100"/></svg>
      <svg width="14" height="15" viewBox="0 0 14 15"><path d="M1 13C1 6 6 1.500 13 1.500M4 13.500C4 8 8 4.500 13 4.500M7 14c0-4 3-6.500 6-6.500" fill="none" stroke="#c9cccc" stroke-width="1.200"/><circle cx="11.500" cy="12.500" r="1.700" fill="#fff"/></svg>
    </div>
    <div class="clock"><span>11:32</span><span>14/08/2025</span></div>
    <div class="notif"><svg width="18" height="17" viewBox="0 0 18 17"><path d="M1 1h16v12H8l-3 3.500V13H1z" fill="#fff"/><path d="M4 4.500h10M4 7h10M4 9.500h7" stroke="#333"/></svg><em>1</em></div>
    <i class="peek"></i>
  </footer>

  <div class="watermark"><div class="w1">Activer Windows</div><div class="w2">Accédez aux paramètres pour activer Windows.</div></div>
</div>
</body>
</html>
```

FILE: styles.css
```css
* { box-sizing: border-box; }
body { margin: 0; background: #fff; font-family: "Open Sans", "Noto Sans", sans-serif; overflow: hidden; }
h1, h2, h4, p, ul { margin: 0; padding: 0; }
ul { list-style: none; }
em, i { font-style: normal; }
svg { flex: none; display: block; }
.defs { position: absolute; }
.screen { position: relative; width: 1920px; height: 1080px; display: flex; flex-direction: column; }

/* browser tabs */
.tabstrip { height: 40px; background: #e4e3e8; display: flex; align-items: center; padding-left: 1px; }
.tab { width: 170.8px; height: 16px; flex: none; padding-left: 14px; display: flex; align-items: center; border-right: 1px solid #cfced4; font-size: 11.3px; color: #6c6d74; }
.tab.no-sep { border-right-color: transparent; }
.tab.active { height: 32px; background: #fff; border-radius: 8px; border: 0; width: 166.8px; margin: 0 2px 0 2.5px; color: #3a3b40; padding-left: 12px; }
.fav { width: 16px; height: 16px; flex: none; }
.dark { color: #3e3f44; }
.tab-title { margin-left: 8px; width: 128px; white-space: nowrap; line-height: 16px; -webkit-mask-image: linear-gradient(90deg, #000 98px, rgba(0,0,0,.15) 122px); mask-image: linear-gradient(90deg, #000 98px, rgba(0,0,0,.15) 122px); }
.active .tab-title { width: 106px; -webkit-mask-image: linear-gradient(90deg, #000 78px, rgba(0,0,0,.15) 99px); mask-image: linear-gradient(90deg, #000 78px, rgba(0,0,0,.15) 99px); }
.close { width: 9px; height: 9px; margin-left: 5px; }
.ringed { display: grid; place-items: center; width: 20px; height: 20px; margin: 0 -2px; flex: none; }
.ringed svg { grid-area: 1 / 1; }
.ringed .fav { width: 14px; height: 14px; }
.ring { width: 21px; height: 21px; }
.tip { background: #d93a55; color: #fff; font: 700 10px/15px "Open Sans", sans-serif; text-align: center; letter-spacing: -.3px; }
.newtab { width: 12px; height: 12px; margin-left: 11px; }
.winctl { display: flex; gap: 34px; margin-left: 66px; }
.winctl svg { width: 12px; height: 12px; }

/* toolbar */
.toolbar { height: 40px; display: flex; align-items: center; }
.nav-btns { display: flex; align-items: center; gap: 17px; margin-left: 16px; width: 276px; }
.nav-btns svg:last-child { margin-left: -1px; }
.urlbar { margin-left: 16px; width: 1079px; height: 32px; border-radius: 8px; background: #edecf2; display: flex; align-items: center; padding-left: 9px; font-size: 13.25px; color: #4d4e55; flex: none; }
.url { margin-left: 15px; width: 910px; white-space: nowrap; flex: none; }
.url b { font-weight: 400; color: #16171b; }
.u-sh { margin-left: 17px; }
.vsep { width: 1px; height: 18px; background: #cbcbd0; flex: none; }
.urlbar .vsep { margin: 0 11px 0 6px; }
.badged { position: relative; width: 34px; flex: none; }
.bdg { position: absolute; left: 11px; top: -3px; height: 14px; border-radius: 5px; color: #fff; font-size: 8px; line-height: 14px; padding: 0 2px; font-weight: 600; }
.bdg.grey { background: #5f6270; }
.bdg.red { background: #fb542b; padding: 0 4px; left: 13px; top: -5px; }
.exts { display: grid; grid-template-columns: repeat(6, 30px) 18px repeat(4, 30px); place-items: center; margin-left: 122px; }
.errbtn { margin-left: 4px; width: 66px; height: 28px; border: 1px solid #4f3f14; border-radius: 8px; background: #f4f2ec; color: #4a3a10; font-size: 11.3px; line-height: 14px; padding-bottom: 1px; display: flex; align-items: center; justify-content: center; gap: 3px; }

/* bookmarks */
.bookmarks { height: 35px; border-bottom: 1px solid #dfdfe2; display: flex; align-items: center; padding: 0 0 4px 11px; font-size: 11.5px; color: #303136; }
.bookmarks .vsep { margin: 0 15px 0 13px; }
.bm-list { width: 1820px; display: grid; grid-template-columns: 84px 84px 65px 69px 74px 73px 84px 72px 102px 90px 95px 138px 106px 107px 125px 110px 87px 76px 80px; }
.bm { display: flex; align-items: center; gap: 6px; white-space: nowrap; line-height: 18px; }
.suno { border-radius: 50%; background: linear-gradient(180deg, #ff3f31, #ff9b05); color: #ffe9dc; font: 700 4.5px/16px "Open Sans", sans-serif; text-align: center; }
.amz { background: #232f3e; color: #fff; font: 700 13px/14px "Open Sans", sans-serif; text-align: center; }
.kdp { background: #2f2f31; color: #fff; font: 700 10px/9px "Open Sans", sans-serif; padding-left: 1px; }
.kdp svg { width: 16px; height: 6px; }
.ak { background: #3b3c3b; color: #fff; font: 700 11px/15px "Open Sans", sans-serif; text-align: center; }
.ak i { color: #7fa51b; }

/* page */
.page { height: 925px; display: flex; background: #fff; overflow: hidden; }
.rail { width: 64px; height: 901px; margin: 12px 0 0 12px; border-radius: 12px; background: linear-gradient(160deg, #defffd 0%, #e2faff 16%, #ecf2ff 42%, #f1f5ff 65%, #f6faff 100%); display: flex; flex-direction: column; align-items: center; }
.logo { width: 32px; height: 32px; margin-top: 14px; }
.panel { width: 16px; height: 16px; margin-top: 20px; }
.search-btn { width: 32px; height: 33px; margin-top: 22px; border-radius: 6px; background: #def3f8; border: 1px solid #d3e8ed; border-bottom-color: #fff; display: flex; align-items: center; justify-content: center; }
.team { width: 24px; height: 24px; margin-top: 23px; border-radius: 5px; background: linear-gradient(135deg, #d57a17, #f7aa3b); color: #fff; font-size: 12px; font-weight: 700; line-height: 24px; text-align: center; }
.rail-icons { margin-top: 30px; display: flex; flex-direction: column; gap: 24px; }
.ico { width: 16px; height: 16px; }
.rail-icons .ico { fill: none; stroke: #4b525a; stroke-width: 1.3; }
.avatar { width: 33px; height: 33px; margin: auto 2px 14px 0; }

.project-nav { width: 333px; padding: 32px 0 0 32px; display: flex; flex-direction: column; gap: 16px; font-size: 13.2px; line-height: 20px; color: #545a61; }
.project-nav a { display: flex; align-items: center; }
.chev { width: 10px; height: 10px; margin-left: 6px; color: #6c7480; }
.project-nav .current, .subnav .current { color: #02807d; font-weight: 600; }
.current::before { content: ""; width: 6px; height: 6px; background: #02807d; transform: rotate(45deg); border-radius: 1px; margin: 0 8px 0 -14px; flex: none; }

.content { width: 1496px; }
.prev-card { width: 780px; height: 24px; border: 1px solid #e9ebed; border-top: 0; border-radius: 0 0 8px 8px; }
.columns { display: flex; }
.subnav { width: 224px; padding: 40px 0 0 15.5px; display: flex; flex-direction: column; gap: 20px; font-size: 13.2px; line-height: 20px; color: #545a61; }
.subnav h4 { font-size: 13px; font-weight: 600; display: flex; align-items: center; height: 20px; }
.subnav ul { padding: 14px 0 6px 16px; display: flex; flex-direction: column; gap: 12px; }
.main { width: 1152px; }
h1 { margin-top: 28px; font-size: 25.8px; line-height: 40px; font-weight: 600; color: #353a3e; }
.intro { margin-top: 37px; height: 55px; display: flex; justify-content: space-between; font-size: 15px; line-height: 24px; color: #545a61; }
.lead { margin-top: -1px; padding-bottom: 1px; }
.doc { margin-top: 7px; display: flex; align-items: center; gap: 7px; color: #02807d; font-size: 14.94px; font-weight: 600; line-height: 25px; }
.btn { height: 36px; border-radius: 6px; display: flex; align-items: center; justify-content: center; font-size: 14.7px; font-weight: 600; }
.add { margin-top: 5px; width: 157px; background: #9da7b2; color: #e9ebed; font-size: 15px; }
.add .chev { margin-left: 9px; }

.card { margin-top: 32px; height: 631px; border: 1px solid #e9ebed; border-radius: 8px; padding-top: 24px; color: #353a3e; }
h2 { margin: 0 24px; font-size: 18.55px; font-weight: 600; line-height: 28px; padding-bottom: 7px; border-bottom: 1px solid #e9ebed; }
.row { display: grid; grid-template-columns: 300px 1fr; padding: 9px 24px; font-size: 15px; line-height: 24px; }
.lbl { margin-top: -1px; }
.tint { background: #fafbfb; }
.key { padding-top: 32px; padding-bottom: 8px; }
.key .lbl { padding-top: 5px; }
.secret { padding-bottom: 15px; }
.scopes { padding-bottom: 8px; }
.values { padding-bottom: 7px; }
.input { height: 36px; border: 1px solid #778089; border-radius: 6px; background: #fff; display: flex; align-items: center; }
.focus { margin-left: -1px; border-color: #353a3e; box-shadow: 0 0 0 2px #32e6e2; padding: 2px 0 0 14px; }
.ph { border-left: 1px solid #000; font: 16px/20px "Liberation Mono", "Courier New", monospace; color: #858d98; }
.opt { display: flex; align-items: flex-start; }
.opt strong { display: block; font-weight: 600; font-size: 14.95px; margin-top: -1px; padding-bottom: 1px; }
.opt p { font-size: 13.21px; line-height: 21px; color: #545a61; white-space: nowrap; }
.opt p.wide { font-size: 13.28px; }
.check, .radio { width: 20px; height: 20px; margin: 1px 10px 0 1px; flex: none; border: 1px solid #6f7884; background: #fff; border-radius: 50%; }
.check { border-radius: 5px; }
.radio.on { border: 0; background: radial-gradient(circle, #014847 3.8px, #32e6e2 4.5px); }
.radio.off { border: 0; background: #d1d5da; }
.scopes .opt + .opt { margin-top: 16px; }
.values .opt + .opt { margin-top: 17px; }
.grow { flex: 1; }
.val { margin-top: 7px; justify-content: flex-end; padding-right: 16px; }
.upgrade { margin-top: 7px; width: 166px; height: 28px; border-radius: 5px; background: #2e51ed; color: #fff; font-size: 12.9px; font-weight: 700; display: flex; align-items: center; padding-left: 15px; gap: 11px; }
.actions { display: flex; gap: 16px; padding: 40px 24px 0; }
.create { width: 140px; background: #90fdfb; color: #014847; }
.cancel { width: 79px; background: #e9eaec; color: #0e1013; }

.scrollbar { width: 15px; background: #fbfbfb; display: flex; flex-direction: column; align-items: center; }
.up, .down { border: 5px solid transparent; width: 0; height: 0; flex: none; }
.up { border-bottom-color: #858585; border-top: 0; margin-top: 6px; }
.down { border-top-color: #858585; border-bottom: 0; margin-top: 119px; }
.thumb { width: 9px; height: 609px; border-radius: 5px; background: #8a8a8a; margin-top: 173px; flex: none; }

/* taskbar */
.taskbar { height: 40px; background: linear-gradient(90deg, #242c22 0, #22241f 20%, #2a2e24 36%, #20282a 50%, #2a2e22 60%, #22292b 68%, #29332d 77%, #232829 86%, #222a28 100%); display: flex; align-items: center; color: #fff; }
.start { width: 48px; display: flex; justify-content: center; }
.tsearch { width: 288px; height: 40px; background: #f2f2f2; border: 1px solid #c2c2c2; color: #2d2d2d; font-size: 13.85px; display: flex; align-items: center; padding-left: 11px; gap: 12px; }
.tasks { display: flex; width: 1196px; margin-left: 1px; }
.t { width: 49px; height: 40px; display: flex; align-items: center; justify-content: center; }
.t svg { height: 24px; }
.t.view svg { height: 17px; margin-left: -2px; }
.t.word { padding-right: 1px; }
.t.open svg { height: 25px; }
.open { background: linear-gradient(#565954, #565954) no-repeat 0 0 / 48px 38px, linear-gradient(#76b9ed, #76b9ed) no-repeat 0 100% / 48px 2px; }
.news { display: flex; align-items: center; gap: 7px; width: 173px; font-size: 13.1px; white-space: nowrap; }
.news svg { margin-left: -2px; margin-right: 2px; }
.tray { display: flex; align-items: center; gap: 9.5px; width: 92px; }
.clock { width: 68px; margin-right: -1px; display: flex; flex-direction: column; align-items: center; font-size: 10.95px; line-height: 18px; }
.notif { position: relative; width: 35px; padding-left: 13px; }
.notif em { position: absolute; left: 21px; top: 6px; width: 17px; height: 17px; border-radius: 50%; border: 1px solid #8c8f8f; background: #2c3030; font-size: 11px; line-height: 15px; text-align: center; }
.peek { width: 1px; height: 40px; background: #7d8180; margin-left: 15px; }

.watermark { position: absolute; left: 1526px; top: 944px; color: #bcbcbc; white-space: nowrap; }
.w1 { font-size: 19px; line-height: 28px; }
.w2 { font-size: 14.2px; line-height: 18px; }
```
